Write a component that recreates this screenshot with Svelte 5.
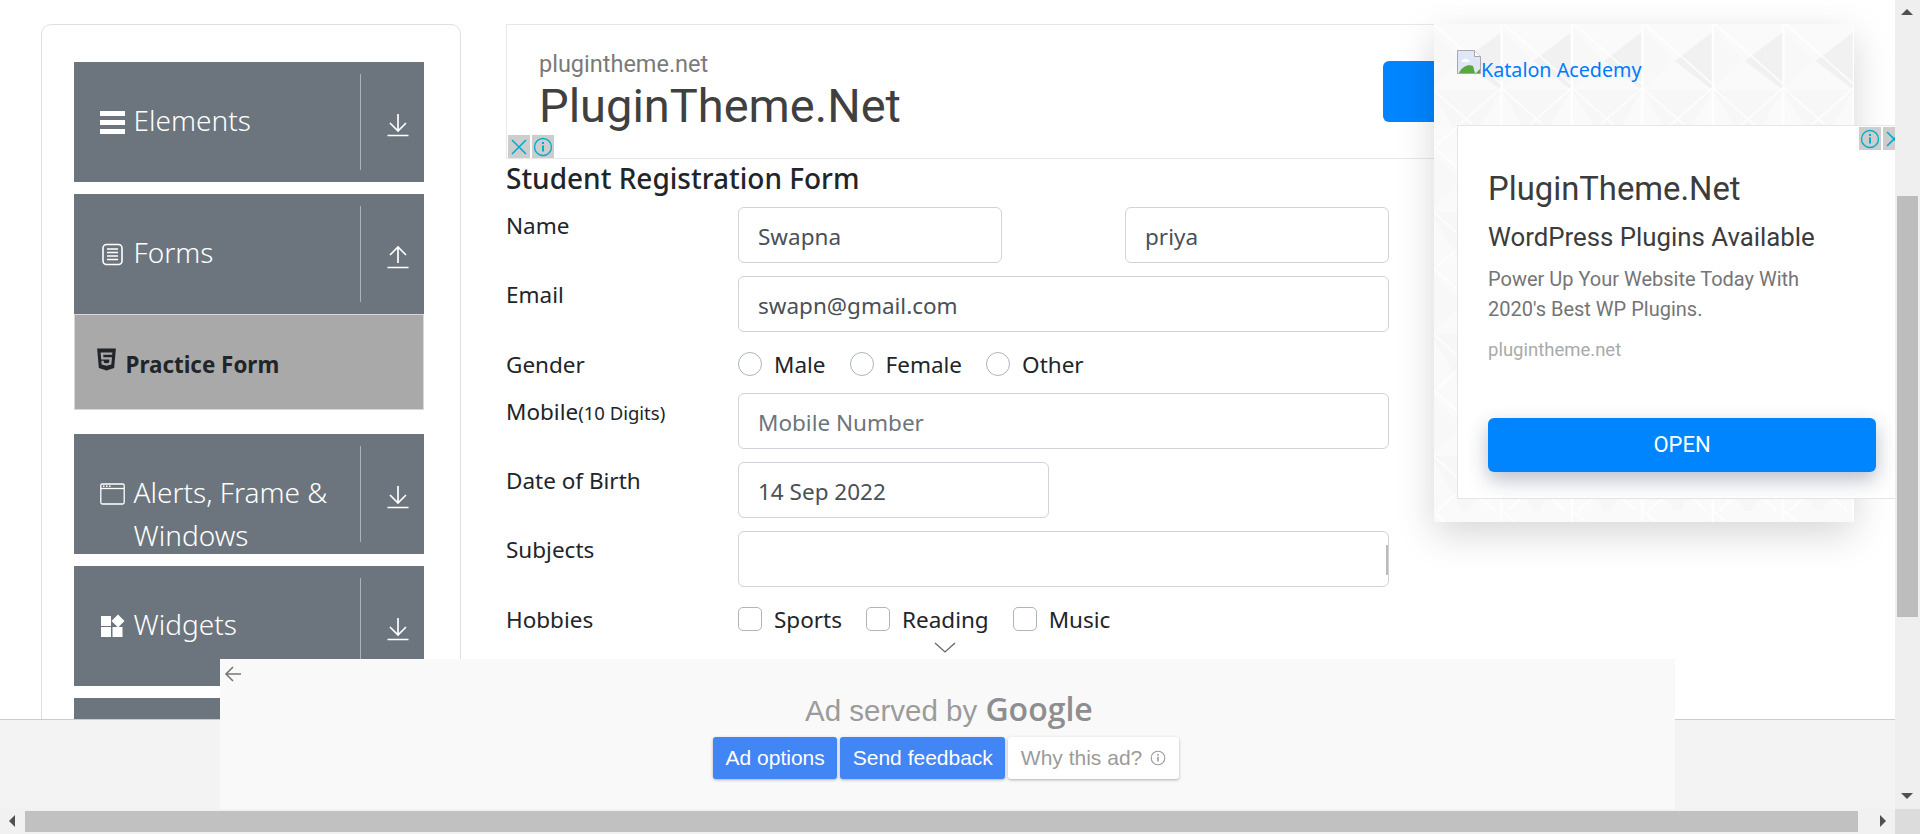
<script>
	const navBefore = [{ title: 'Elements', icon: 'bars', open: false }, { title: 'Forms', icon: 'doc', open: true }];
	const navAfter = [
		{ title: 'Alerts, Frame & Windows', icon: 'window', open: false },
		{ title: 'Widgets', icon: 'grid', open: false },
		{ title: 'Interactions', icon: 'grid', open: false }
	];
</script>

{#snippet navIcon(name)}
	<svg class="nav-icon" viewBox="0 0 25 24" fill="none" stroke="#fff">
		{#if name === 'bars'}
			<path d="M0 1h25v5H0zM0 10h25v5H0zM0 19h25v5H0z" fill="#fff" stroke="none" />
		{:else if name === 'doc'}
			<rect x="3" y="2.500" width="19" height="20" rx="3.500" stroke-width="1.600" />
			<path d="M7 7h11M7 10.500h11M7 14h11M7 17.500h11" stroke-width="1.300" />
		{:else if name === 'window'}
			<rect x="0.800" y="2" width="23.400" height="20" rx="1.500" stroke-width="1.300" />
			<path d="M1 6.500h23" stroke-width="1.300" />
			<path d="M3 4.200h1.500M6 4.200h1.500M9 4.200h1.500" stroke-width="1.400" />
		{:else}
			<path d="M1 2h10v10H1zM1 13h10v10H1zM12.500 13h10v10h-10z" fill="#fff" stroke="none" />
			<path d="M18 0.500l6.500 6.500-6.500 6.500-6.500-6.500z" fill="#fff" stroke="none" />
		{/if}
	</svg>
{/snippet}

{#snippet navItem(item)}
	<div class="nav-item">
		<div class="nav-title">
			{@render navIcon(item.icon)}
			<span>{item.title}</span>
		</div>
		<div class="nav-arrow">
			<svg viewBox="0 0 22 24" fill="none" stroke="#fff" stroke-width="1.700">
				{#if item.open}
					<path d="M11 18V2M3 10l8-8 8 8M0.500 22.500h21" />
				{:else}
					<path d="M11 1v17M3 10l8 8 8-8M0.500 22.500h21" />
				{/if}
			</svg>
		</div>
	</div>
{/snippet}

{#snippet info(size)}
	<svg width={size} height={size} viewBox="0 0 20 20" fill="none" stroke="currentColor">
		<circle cx="10" cy="10" r="8.500" stroke-width="1.400" />
		<path d="M10 8.500v6" stroke-width="2" />
		<path d="M10 5v2" stroke-width="2" />
	</svg>
{/snippet}

<div class="viewport">
	<div class="page">
		<aside class="sidebar">
			{#each navBefore as item}
				{@render navItem(item)}
			{/each}
			<div class="sub-item">
				<svg class="html5" viewBox="0 0 384 512" fill="#212529">
					<path d="M0 32l34.900 395.800L191.500 480l157.600-52.200L384 32H0zm308.200 127.900H124.400l4.100 49.400h175.600l-13.600 148.400-97.900 27v.3h-1.100l-98.700-27.300-6-75.800h47.700L138 320l53.500 14.500 53.700-14.500 6-62.200H84.300L71.500 112.200h241.100l-4.400 47.700z" />
				</svg>
				Practice Form
			</div>
			<div class="sub-gap"></div>
			{#each navAfter as item}
				{@render navItem(item)}
			{/each}
		</aside>

		<main class="main">
			<div class="top-ad">
				<div class="top-ad-url">plugintheme.net</div>
				<div class="top-ad-title">PluginTheme.Net</div>
				<div class="top-ad-btn"></div>
				<div class="ad-marks left">
					<span class="mark">
						<svg width="18" height="18" viewBox="0 0 18 18" stroke="currentColor" stroke-width="1.600"><path d="M2 2l14 14M16 2L2 16" /></svg>
					</span>
					<span class="mark">{@render info(20)}</span>
				</div>
			</div>

			<h5 class="form-title">Student Registration Form</h5>

			<form class="form">
				<label class="field-label" for="firstName">Name</label>
				<div class="field name-fields">
					<input id="firstName" class="input" value="Swapna" />
					<input class="input" value="priya" />
				</div>

				<label class="field-label" for="email">Email</label>
				<div class="field"><input id="email" class="input" value="swapn@gmail.com" /></div>

				<div class="field-label gender-label">Gender</div>
				<div class="field choices gender-choices">
					<label class="choice"><input type="radio" name="gender" />Male</label>
					<label class="choice"><input type="radio" name="gender" />Female</label>
					<label class="choice"><input type="radio" name="gender" />Other</label>
				</div>

				<label class="field-label" for="mobile">Mobile<small>(10 Digits)</small></label>
				<div class="field"><input id="mobile" class="input" placeholder="Mobile Number" /></div>

				<label class="field-label" for="dob">Date of Birth</label>
				<div class="field"><input id="dob" class="input dob" value="14 Sep 2022" /></div>

				<label class="field-label" for="subjects">Subjects</label>
				<div class="field subjects"><input id="subjects" class="input" /><i class="caret"></i></div>

				<div class="field-label hobbies-label">Hobbies</div>
				<div class="field choices">
					<label class="choice"><input type="checkbox" />Sports</label>
					<label class="choice"><input type="checkbox" />Reading</label>
					<label class="choice"><input type="checkbox" />Music</label>
				</div>
			</form>
		</main>

		<div class="side-ad">
			<svg class="side-ad-pattern" width="100%" height="100%">
				<defs>
					<pattern id="tri" width="70.500" height="122" patternUnits="userSpaceOnUse" x="-3" y="-2">
						<path d="M70 10v58L32 39z" fill="#f1f1f1" />
						<path d="M0 68l35 60 35-60z" fill="#f7f7f7" />
						<path d="M2 8l28 30L2 66z" fill="#f8f8f8" />
						<path d="M0 0v122M70 0v122M0 66l70 62M70 66L0 128M0 0l70 62" stroke="#fff" stroke-width="1.500" fill="none" />
					</pattern>
				</defs>
				<rect width="100%" height="100%" fill="#fafafa" />
				<rect width="100%" height="100%" fill="url(#tri)" />
			</svg>
			<a class="katalon" href="#top">
				<svg class="broken" width="24" height="24" viewBox="0 0 24 24">
					<path d="M0.500 0.500h17l6 6v17H0.500z" fill="#dfe6f7" stroke="#a8a8a8" />
					<path d="M17.500 0.500v6h6" fill="#fff" stroke="#a8a8a8" />
					<path d="M6 10c1-2 4-2 5 0 2 0 2 2 0 2H6c-2 0-2-2 0-2z" fill="#fff" />
					<path d="M2 23c3-7 10-9 14-7l2 7z" fill="#5aa83c" />
					<path d="M19 23l4-4v4z" fill="#5aa83c" />
				</svg>
				Katalon Acedemy
			</a>
			<div class="side-card">
				<div class="ad-marks right">
					<span class="mark">{@render info(20)}</span>
					<span class="mark">
						<svg width="18" height="18" viewBox="0 0 18 18" stroke="currentColor" stroke-width="1.600"><path d="M2 2l14 14M16 2L2 16" /></svg>
					</span>
				</div>
				<div class="side-title">PluginTheme.Net</div>
				<div class="side-sub">WordPress Plugins Available</div>
				<div class="side-desc">Power Up Your Website Today With<br />2020's Best WP Plugins.</div>
				<div class="side-url">plugintheme.net</div>
				<div class="side-open">OPEN</div>
			</div>
		</div>

		<div class="anchor-strip"></div>
		<svg class="anchor-chevron" width="22" height="12" viewBox="0 0 22 12" fill="none" stroke="#666" stroke-width="1.300">
			<path d="M1 1l10 9 10-9" />
		</svg>
		<div class="anchor-ad">
			<svg class="back" width="18" height="16" viewBox="0 0 18 16" fill="none" stroke="#777" stroke-width="1.600">
				<path d="M17 8H2M9 1L2 8l7 7" />
			</svg>
			<div class="served">Ad served by <b>Google</b></div>
			<div class="served-actions">
				<span class="served-btn">Ad options</span>
				<span class="served-btn">Send feedback</span>
				<span class="served-btn why">Why this ad? {@render info(16)}</span>
			</div>
		</div>
	</div>

	<div class="vbar">
		<i class="tri up"></i>
		<div class="vthumb"></div>
		<i class="tri down"></i>
	</div>
	<div class="hbar">
		<i class="tri lft"></i>
		<div class="hthumb"></div>
		<i class="tri rgt"></i>
	</div>
	<div class="corner"></div>
</div>

<style>
	:global(body) {
		margin: 0;
		background: #fff;
	}
	.viewport {
		width: 1920px;
		height: 834px;
		overflow: hidden;
		display: grid;
		grid-template-columns: 1895px 25px;
		grid-template-rows: 809px 25px;
		font-family: "Noto Sans", "Open Sans", sans-serif;
		color: #212529;
	}
	.page {
		position: relative;
		display: flex;
		align-items: flex-start;
		padding: 24px 0 0 41px;
		overflow: hidden;
		box-sizing: border-box;
	}
	.sidebar {
		flex: none;
		width: 420px;
		box-sizing: border-box;
		height: 900px;
		padding: 36.500px 36.500px 0 31.500px;
		border: 1.500px solid #dfdfdf;
		border-radius: 10px;
	}
	.nav-item {
		display: flex;
		height: 120px;
		overflow: hidden;
		background: #6c757d;
		color: #fff;
		margin-bottom: 12px;
	}
	.nav-item:nth-of-type(2) {
		margin-bottom: 0;
	}
	.nav-title {
		flex: 1;
		display: flex;
		gap: 9px;
		padding: 37px 20px 0 26px;
		font-size: 28px;
		font-weight: 300;
		line-height: 43px;
	}
	.nav-icon {
		flex: none;
		width: 25px;
		height: 24px;
		margin-top: 11px;
	}
	.nav-arrow {
		flex: none;
		box-sizing: border-box;
		width: 64px;
		height: 96px;
		margin: 12px 0;
		border-left: 1px solid #adb1b6;
		padding: 39px 0 0 26px;
	}
	.nav-arrow svg {
		display: block;
		width: 22px;
		height: 24px;
	}
	.sub-item {
		box-sizing: border-box;
		height: 96px;
		display: flex;
		align-items: center;
		gap: 10px;
		padding: 5px 0 0 22px;
		background: #a9a9a9;
		border: 1px solid #d5d8dc;
		font-size: 22.400px;
		font-weight: 700;
	}
	.html5 {
		width: 19px;
		height: 25px;
		margin-bottom: 9px;
	}
	.sub-gap {
		height: 24px;
	}

	.main {
		flex: none;
		width: 1000px;
		margin-left: 45px;
	}
	.top-ad {
		position: relative;
		box-sizing: border-box;
		height: 135px;
		border: 1.500px solid #e8e8e8;
		background: #fff;
		padding: 26px 32px;
		font-family: Roboto, sans-serif;
	}
	.top-ad-url {
		font-size: 23.500px;
		line-height: 27px;
		color: #7a7a7a;
	}
	.top-ad-title {
		font-size: 47px;
		line-height: 56px;
		color: #404040;
	}
	.top-ad-btn {
		position: absolute;
		left: 876px;
		top: 36px;
		width: 120px;
		height: 61px;
		background: #0085ff;
		border-radius: 6px;
	}
	.ad-marks {
		position: absolute;
		display: flex;
		gap: 2px;
		color: #00aecd;
	}
	.ad-marks.left {
		left: 1px;
		bottom: 0;
	}
	.ad-marks.right {
		top: 1px;
		left: 401px;
	}
	.mark {
		width: 22px;
		height: 23px;
		display: flex;
		align-items: center;
		justify-content: center;
		background: #cdcdcd;
	}
	.form-title {
		margin: 3px 0 13px;
		font-size: 28px;
		line-height: 32px;
		font-weight: 500;
	}
	.form {
		width: 883px;
		display: grid;
		grid-template-columns: 232px 651px;
		row-gap: 13px;
	}
	.field-label {
		font-size: 22.500px;
		line-height: 34px;
		padding-top: 2px;
	}
	.field-label small {
		font-size: 18.500px;
	}
	.gender-label {
		line-height: 30px;
		padding-top: 5px;
	}
	.hobbies-label {
		padding-top: 3px;
	}
	.name-fields {
		display: flex;
		gap: 123px;
	}
	.input {
		box-sizing: border-box;
		display: block;
		width: 100%;
		min-width: 0;
		height: 56px;
		padding: 3px 19px 0;
		border: 1.250px solid #ced4da;
		border-radius: 6px;
		background: #fff;
		color: #495057;
		font: 22.500px "Noto Sans", "Open Sans", sans-serif;
		outline: none;
	}
	.input::placeholder {
		color: #6c757d;
	}
	.dob {
		width: 311px;
	}
	.subjects {
		position: relative;
	}
	.caret {
		position: absolute;
		right: 1px;
		top: 14px;
		width: 2px;
		height: 30px;
		background: #bbb;
	}
	.choices {
		display: flex;
		align-items: flex-start;
		gap: 24px;
		padding-top: 5px;
		height: 34px;
	}
	.gender-choices {
		height: 35px;
		padding-top: 5px;
		box-sizing: border-box;
	}
	.choice {
		display: flex;
		align-items: center;
		gap: 12px;
		font-size: 22.500px;
		line-height: 30px;
	}
	.choice input {
		appearance: none;
		flex: none;
		margin: 0 0 3px;
		width: 24px;
		height: 24px;
		border: 1px solid #adb5bd;
		border-radius: 5px;
		background: #fff;
	}
	.choice input[type="radio"] {
		border-radius: 50%;
	}

	.side-ad {
		position: absolute;
		left: 1434px;
		top: 24px;
		width: 420px;
		height: 498px;
		box-shadow: 0 12px 36px rgba(0, 0, 0, 0.16);
	}
	.side-ad-pattern {
		position: absolute;
		inset: 0;
	}
	.katalon {
		position: absolute;
		left: 23px;
		top: 31px;
		display: flex;
		align-items: flex-start;
		font-size: 19.700px;
		line-height: 30px;
		color: #007bff;
		text-decoration: none;
		white-space: nowrap;
	}
	.broken {
		margin-top: -5px;
	}
	.side-card {
		position: absolute;
		left: 23px;
		top: 101px;
		width: 480px;
		height: 374px;
		box-sizing: border-box;
		border: 1.500px solid #e6e6e6;
		background: #fff;
		padding: 43px 0 0 30px;
		font-family: Roboto, sans-serif;
	}
	.side-title {
		font-size: 32.800px;
		line-height: 40px;
		color: #3c3c3c;
	}
	.side-sub {
		margin-top: 13px;
		font-size: 25.800px;
		line-height: 30px;
		font-weight: 400;
		color: #3c3c3c;
	}
	.side-desc {
		margin-top: 13px;
		font-size: 20px;
		line-height: 29.500px;
		color: #757575;
	}
	.side-url {
		margin-top: 13px;
		font-size: 18.500px;
		line-height: 26px;
		color: #aaa;
	}
	.side-open {
		position: absolute;
		left: 30px;
		top: 292px;
		width: 388px;
		height: 54px;
		line-height: 54px;
		text-align: center;
		border-radius: 6px;
		background: #0085ff;
		color: #fff;
		font-size: 22px;
		box-shadow: 0 8px 20px rgba(30, 40, 80, 0.3);
	}

	.anchor-strip {
		position: absolute;
		left: 0;
		right: 0;
		bottom: 0;
		height: 90px;
		box-sizing: border-box;
		background: #f3f3f3;
		border-top: 1.500px solid #ccc;
	}
	.anchor-chevron {
		position: absolute;
		left: 934px;
		top: 642px;
	}
	.anchor-ad {
		position: absolute;
		left: 220px;
		top: 659px;
		width: 1455px;
		height: 150px;
		background: #f9f9fa;
		font-family: "Liberation Sans", Arial, sans-serif;
		color: #9b9b9b;
	}
	.back {
		position: absolute;
		left: 4px;
		top: 7px;
	}
	.served {
		position: absolute;
		left: 585px;
		top: 30px;
		font-size: 29.500px;
		line-height: 40px;
		white-space: nowrap;
	}
	.served b {
		font-family: "Open Sans", sans-serif;
		font-size: 32px;
		font-weight: 600;
		color: #8e8e8e;
	}
	.served-actions {
		position: absolute;
		left: 493px;
		top: 78px;
		display: flex;
		gap: 3px;
	}
	.served-btn {
		display: flex;
		align-items: center;
		gap: 8px;
		height: 42px;
		padding: 0 12.500px;
		background: #4285f4;
		color: #fff;
		border-radius: 3px;
		font-size: 21px;
		box-shadow: 0 1px 3px rgba(0, 0, 0, 0.3);
	}
	.served-btn.why {
		background: #fff;
		color: #9b9b9b;
	}

	.vbar {
		position: relative;
		z-index: 3;
		background: #efefef;
	}
	.vthumb {
		position: absolute;
		left: 2px;
		top: 196px;
		width: 21px;
		height: 421px;
		background: #bdbdbd;
	}
	.hbar {
		position: relative;
		z-index: 3;
		background: #f1f1f1;
	}
	.hthumb {
		position: absolute;
		left: 25px;
		top: 2px;
		width: 1833px;
		height: 21px;
		background: #c1c1c1;
	}
	.corner {
		z-index: 3;
		background: #dcdcdc;
	}
	.tri {
		position: absolute;
		width: 0;
		height: 0;
		border: 6px solid transparent;
	}
	.tri.up {
		left: 6px;
		top: 9px;
		border-top: 0;
		border-bottom: 6px solid #505050;
	}
	.tri.down {
		left: 6px;
		top: 793px;
		border-bottom: 0;
		border-top: 6px solid #505050;
	}
	.tri.lft {
		left: 9px;
		top: 6px;
		border-left: 0;
		border-right: 6px solid #505050;
	}
	.tri.rgt {
		left: 1880px;
		top: 6px;
		border-right: 0;
		border-left: 6px solid #505050;
	}
</style>
